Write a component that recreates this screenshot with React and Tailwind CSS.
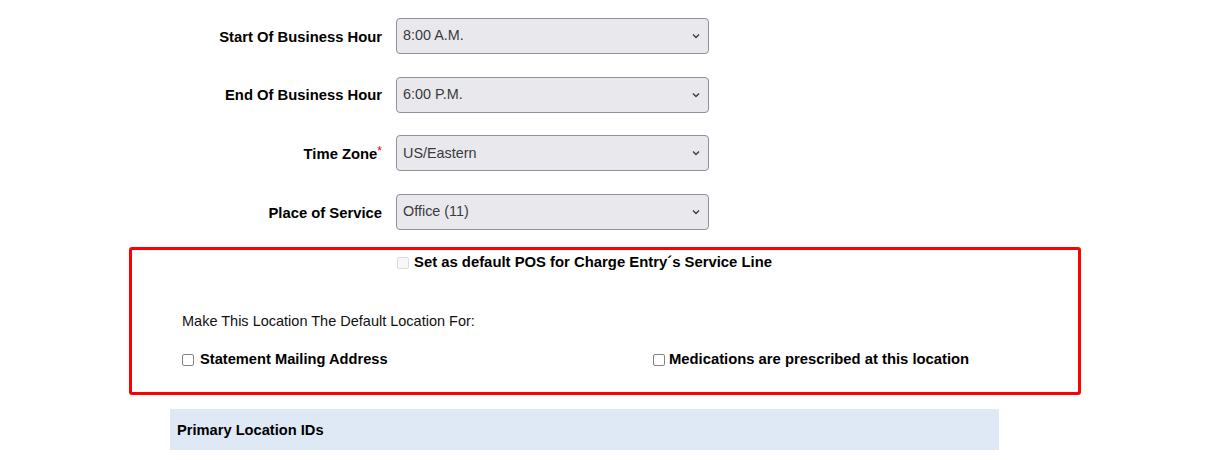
import React from 'react';

const fields = [
  { label: 'Start Of Business Hour', value: '8:00 A.M.' },
  { label: 'End Of Business Hour', value: '6:00 P.M.' },
  { label: 'Time Zone', value: 'US/Eastern', required: true },
  { label: 'Place of Service', value: 'Office (11)' },
];

const Chevron = () => (
  <svg
    className="pointer-events-none absolute right-[9px] top-1/2 -translate-y-1/2"
    width="8"
    height="5"
    viewBox="0 0 8 5"
    fill="none"
  >
    <path d="M1 1l3 3 3-3" stroke="#3b3b3b" strokeWidth="1.4" />
  </svg>
);

const Box = ({ disabled }) => (
  <span
    className={
      disabled
        ? 'inline-block w-[12px] h-[12px] rounded-[2px] border border-[#dcdcdc] bg-[#f7f7f7] shrink-0'
        : 'inline-block w-[12px] h-[12px] rounded-[2px] border-[1.5px] border-[#858585] bg-white shrink-0'
    }
  />
);

const App = () => {
  return (
    <div className="min-h-screen bg-white pt-[18px] font-['Liberation_Sans',Arial,sans-serif] text-black">
      {/* Campos de horario */}
      <div className="flex flex-col gap-[22.7px]">
        {fields.map((f) => (
          <div key={f.label} className="flex items-center">
            <label className="w-[382px] pt-[2px] text-right text-[14.8px] font-bold leading-[17px]">
              {f.label}
              {f.required && <sup className="text-[#e00000] text-[12px] font-normal top-[-4px]">*</sup>}
            </label>
            <div className="relative ml-[14px] w-[313px] h-[36px]">
              <select
                defaultValue={f.value}
                className="appearance-none w-full h-full rounded-[4px] border border-[#8f8f9d] bg-[#e9e9ed] pl-[6px] text-[14.4px] text-[#3a3a3a] outline-none"
              >
                <option>{f.value}</option>
              </select>
              <Chevron />
            </div>
          </div>
        ))}
      </div>

      {/* Caja resaltada */}
      <div className="ml-[129px] mt-[17px] w-[952px] h-[148px] border-[3px] border-[#ff0000] rounded-[3px]">
        <div className="flex items-center gap-[5px] pl-[265px] pt-[4px]">
          <Box disabled />
          <span className="text-[14.85px] font-bold leading-[17px]">
            Set as default POS for Charge Entry´s Service Line
          </span>
        </div>
        <p className="ml-[50px] mt-[42px] text-[14.5px] leading-[17px] text-[#111]">
          Make This Location The Default Location For:
        </p>
        <div className="ml-[50px] mt-[21px] grid grid-cols-[471px_1fr]">
          <div className="flex items-center gap-[6px]">
            <Box />
            <span className="text-[14.67px] font-bold leading-[17px]">Statement Mailing Address</span>
          </div>
          <div className="flex items-center gap-[4px]">
            <Box />
            <span className="text-[14.8px] font-bold leading-[17px]">Medications are prescribed at this location</span>
          </div>
        </div>
      </div>

      <div className="ml-[170px] mt-[14px] w-[829px] h-[41px] bg-[#dfe8f5] flex items-center pl-[7px]">
        <span className="text-[14.67px] font-bold">Primary Location IDs</span>
      </div>
    </div>
  );
};

export default App;
